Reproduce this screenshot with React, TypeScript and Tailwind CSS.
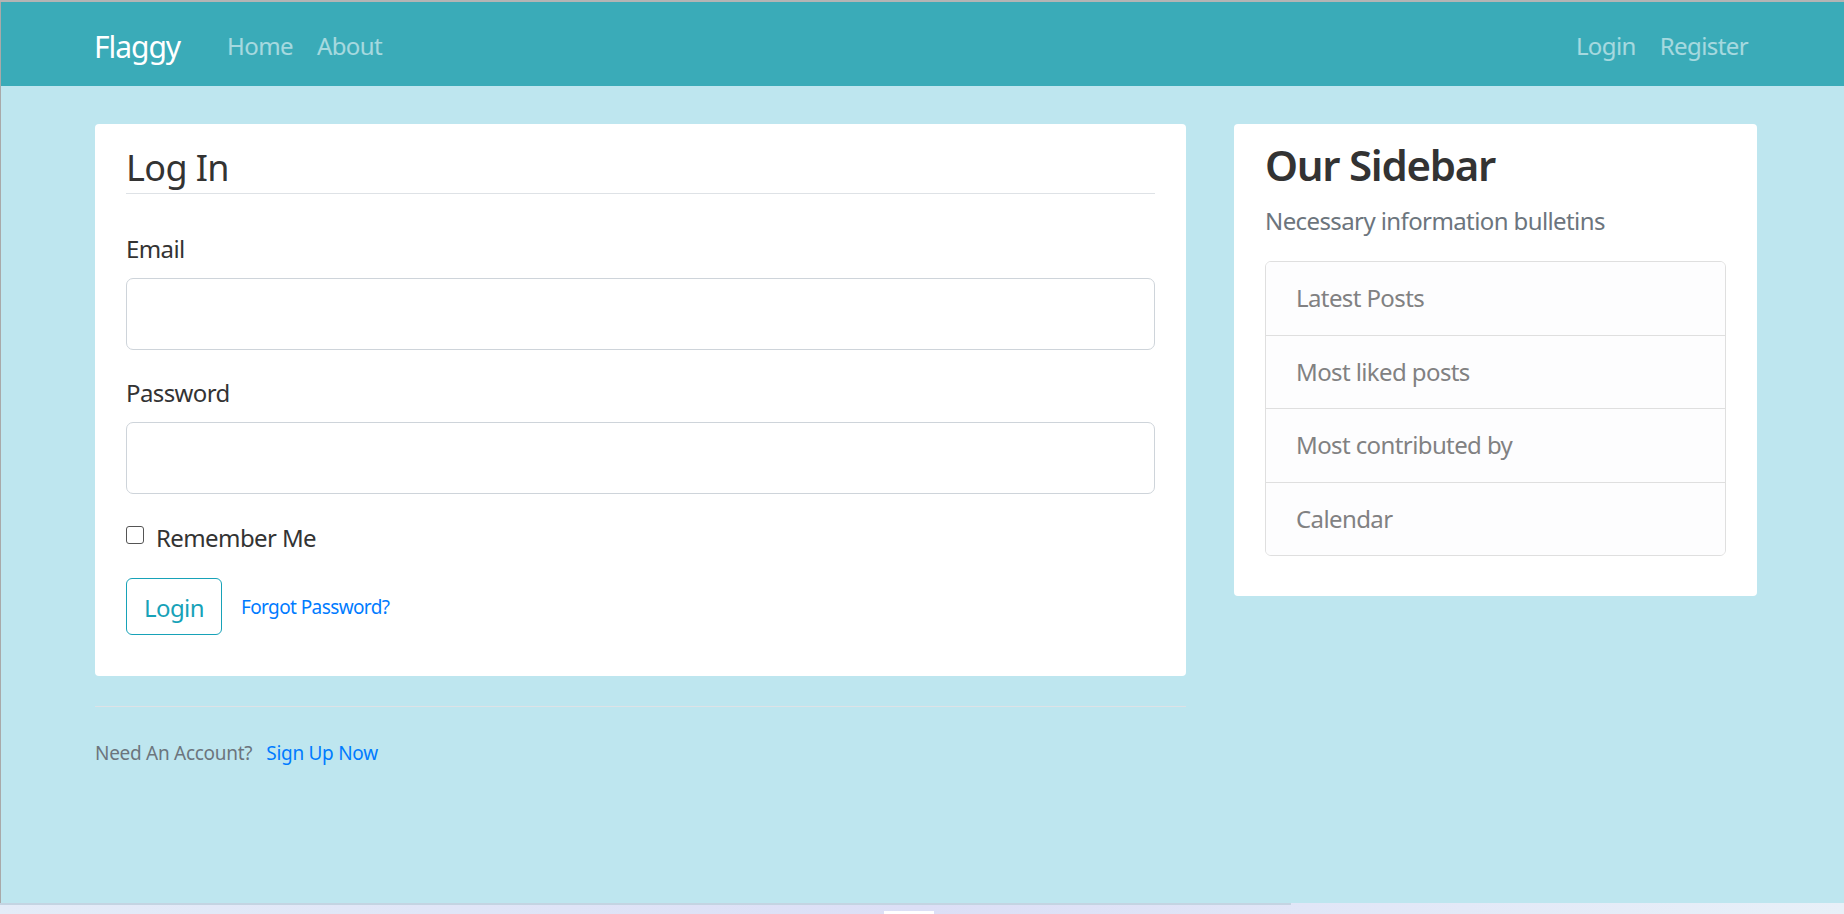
const navLinks = ["Home", "About"]
const authLinks = ["Login", "Register"]
const sidebarItems = ["Latest Posts", "Most liked posts", "Most contributed by", "Calendar"]

function Navbar() {
  return (
    <header className="flex h-[84px] shrink-0 items-center bg-[#3aabb8] pl-[93px] pr-[84px] pt-[4px]">
      <a href="#" className="mr-[35px] text-[30px] leading-[45px] tracking-[-0.035em] text-white">
        Flaggy
      </a>
      <nav className="flex">
        {navLinks.map((l) => (
          <a key={l} href="#" className="px-[12px] text-[24px] leading-[36px] text-white/55">
            {l}
          </a>
        ))}
      </nav>
      <nav className="ml-auto flex">
        {authLinks.map((l) => (
          <a key={l} href="#" className="px-[12px] text-[24px] leading-[36px] text-white/55">
            {l}
          </a>
        ))}
      </nav>
    </header>
  )
}

function LoginCard() {
  return (
    <div className="rounded-[4px] bg-white px-[31px] pb-[17px] pt-[15px]">
      <div className="mb-[36px] border-b border-[#dee2e6] pt-[4px] text-[36px] leading-[50px] text-[#333333]">Log In</div>

      <div className="mb-[24px]">
        <label className="mb-[11px] block pt-[1px] leading-[36px]">Email</label>
        <input type="email" className="block h-[72px] w-full rounded-[7px] border border-[#ced4da] bg-white px-[24px] text-[30px] outline-none" />
      </div>

      <div className="mb-[24px]">
        <label className="mb-[11px] block pt-[1px] leading-[36px]">Password</label>
        <input type="password" className="block h-[72px] w-full rounded-[7px] border border-[#ced4da] bg-white px-[24px] text-[30px] outline-none" />
      </div>

      <div className="mb-[22px] flex items-start">
        <span className="mt-[8px] h-[18px] w-[18px] shrink-0 rounded-[3px] border-[1.5px] border-[#555555] bg-white" />
        <span className="ml-[12px] pt-[2px] leading-[36px]">Remember Me</span>
      </div>

      <div className="mb-[24px] flex items-center">
        <button className="h-[57px] rounded-[6px] border-[1.5px] border-[#17a2b8] px-[17px] pt-[2px] text-[24px] leading-[36px] text-[#17a2b8]">
          Login
        </button>
        <a href="#" className="ml-[19px] text-[19px] leading-[28px] text-[#007bff]">
          Forgot Password?
        </a>
      </div>
    </div>
  )
}

function Sidebar() {
  return (
    <aside className="w-[523px] shrink-0 self-start rounded-[4px] bg-white px-[31px] pb-[16px] pt-[15px]">
      <h3 className="mb-[12px] pt-[1px] text-[42px] font-semibold leading-[1.2] tracking-[-0.03em] text-[#333333]">Our Sidebar</h3>
      <p className="mb-[22px] pt-[1px] leading-[36px] text-[#6c757d]">Necessary information bulletins</p>
      <ul className="mb-[24px] overflow-hidden rounded-[6px] border border-[#dfdfdf]">
        {sidebarItems.map((item, i) => (
          <li
            key={item}
            className={
              i < sidebarItems.length - 1
                ? "border-b border-[#dfdfdf] bg-[#fdfdfe] px-[30px] pb-[18.5px] pt-[17px] leading-[37px] text-[#818182]"
                : "bg-[#fdfdfe] px-[30px] pb-[18.5px] pt-[17px] leading-[37px] text-[#818182]"
            }
          >
            {item}
          </li>
        ))}
      </ul>
    </aside>
  )
}

export default function App() {
  return (
    <div className="flex h-[914px] flex-col overflow-hidden bg-[#bee6ef] font-['Noto_Sans','Open_Sans',sans-serif] text-[24px] leading-[1.5] tracking-[-0.025em] text-[#333333]">
      <div className="h-[2px] shrink-0 bg-[#b4b4b4]" />
      <div className="flex flex-1 flex-col border-l border-[#a9a9a9]">
        <Navbar />
        <main className="flex gap-[48px] pl-[94px] pr-[87px] pt-[38px]">
          <div className="w-[1091px] shrink-0">
            <LoginCard />
            <div className="mt-[30px] border-t border-[#dee2e6] pt-[26px]">
              <small className="text-[19px] tracking-[-0.015em] text-[#6c757d]">
                Need An Account?
                <a href="#" className="ml-[14px] text-[#007bff]">
                  Sign Up Now
                </a>
              </small>
            </div>
          </div>
          <Sidebar />
        </main>
      </div>
      <div className="relative h-[11px] shrink-0 bg-gradient-to-r from-[#e4ecf8] via-[#dcdff6] to-[#e8f0f8]">
        <div className="h-[2px] w-[1291px] bg-[#c4d4e2]" />
        <div className="absolute bottom-0 left-[884px] h-[3px] w-[50px] bg-white" />
      </div>
    </div>
  )
}
